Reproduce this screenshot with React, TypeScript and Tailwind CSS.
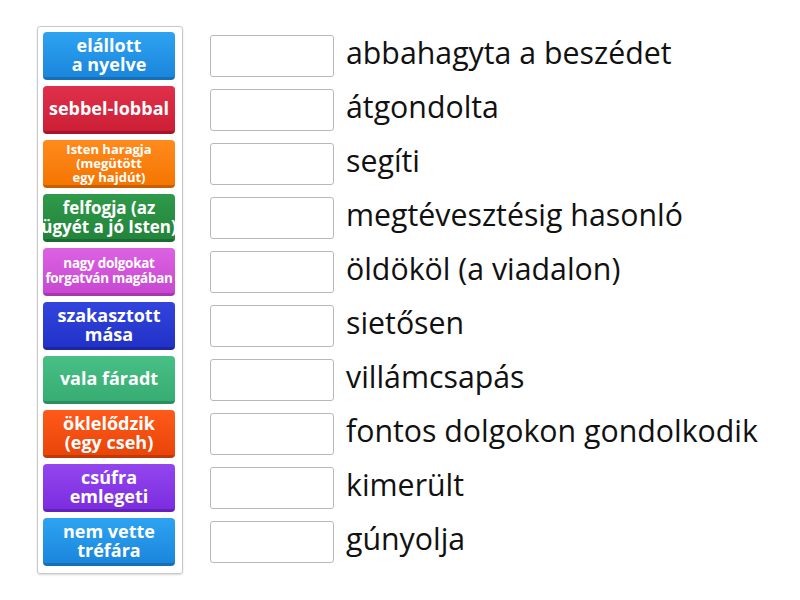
import React from "react";

type Card = { lines: string[]; bg: string; size: string };

const N = "text-[18px] leading-[19px]";

const cards: Card[] = [
  { lines: ["elállott", "a nyelve"], bg: "bg-gradient-to-b from-[#2ea3f2] to-[#1a86dc] border-b-[#1570b8]", size: N },
  { lines: ["sebbel-lobbal"], bg: "bg-gradient-to-b from-[#e0304a] to-[#cc1f36] border-b-[#a5162a]", size: N },
  { lines: ["Isten haragja", "(megütött", "egy hajdút)"], bg: "bg-gradient-to-b from-[#ff8a1c] to-[#f57600] border-b-[#c85f00]", size: "text-[13px] leading-[14px]" },
  { lines: ["felfogja (az", "ügyét a jó Isten)"], bg: "bg-gradient-to-b from-[#2f9a4a] to-[#23843c] border-b-[#1b6a30]", size: "text-[17px] leading-[19px]" },
  { lines: ["nagy dolgokat", "forgatván magában"], bg: "bg-gradient-to-b from-[#dc62e2] to-[#c847d2] border-b-[#a737ae]", size: "text-[13.5px] leading-[15px] tracking-[-0.3px]" },
  { lines: ["szakasztott", "mása"], bg: "bg-gradient-to-b from-[#3344dd] to-[#2232c8] border-b-[#1a27a2]", size: N },
  { lines: ["vala fáradt"], bg: "bg-gradient-to-b from-[#48bf84] to-[#37ad74] border-b-[#2b8e5e]", size: N },
  { lines: ["öklelődzik", "(egy cseh)"], bg: "bg-gradient-to-b from-[#ff5a1a] to-[#e94508] border-b-[#c23806]", size: N },
  { lines: ["csúfra", "emlegeti"], bg: "bg-gradient-to-b from-[#9345ee] to-[#7c2de0] border-b-[#6422b8]", size: N },
  { lines: ["nem vette", "tréfára"], bg: "bg-gradient-to-b from-[#2ea3f2] to-[#1a86dc] border-b-[#1570b8]", size: N },
];

const labels = [
  "abbahagyta a beszédet",
  "átgondolta",
  "segíti",
  "megtévesztésig hasonló",
  "öldököl (a viadalon)",
  "sietősen",
  "villámcsapás",
  "fontos dolgokon gondolkodik",
  "kimerült",
  "gúnyolja",
];

export default function App() {
  return (
    <div
      className="w-[800px] h-[600px] bg-white flex items-start pt-[26px] pl-[37px]"
      style={{ fontFamily: '"Open Sans", "Noto Sans", sans-serif' }}
    >
      <div className="w-[146px] h-[548px] border border-[#c8c8c8] rounded-[3px] p-[5px] flex flex-col gap-[6px] shadow-[0_1px_2px_rgba(0,0,0,0.15)]">
        {cards.map((c, i) => (
          <div
            key={i}
            className={`h-[48px] w-[132px] rounded-[4px] border-b-[3px] flex flex-col items-center justify-center text-white font-bold text-center ${c.bg} ${c.size}`}
          >
            {c.lines.map((l, j) => (
              <div key={j} className="whitespace-nowrap">{l}</div>
            ))}
          </div>
        ))}
      </div>
      <div className="ml-[27px] pt-[6px] flex flex-col gap-[6px]">
        {labels.map((l, i) => (
          <div key={i} className="h-[48px] flex items-center">
            <div className="w-[124px] h-[42px] border border-[#b8b8b8] rounded-[3px] bg-white shrink-0" />
            <div className="ml-[12px] text-[30.3px] text-[#111] whitespace-nowrap leading-none pb-[6px]">{l}</div>
          </div>
        ))}
      </div>
    </div>
  );
}
